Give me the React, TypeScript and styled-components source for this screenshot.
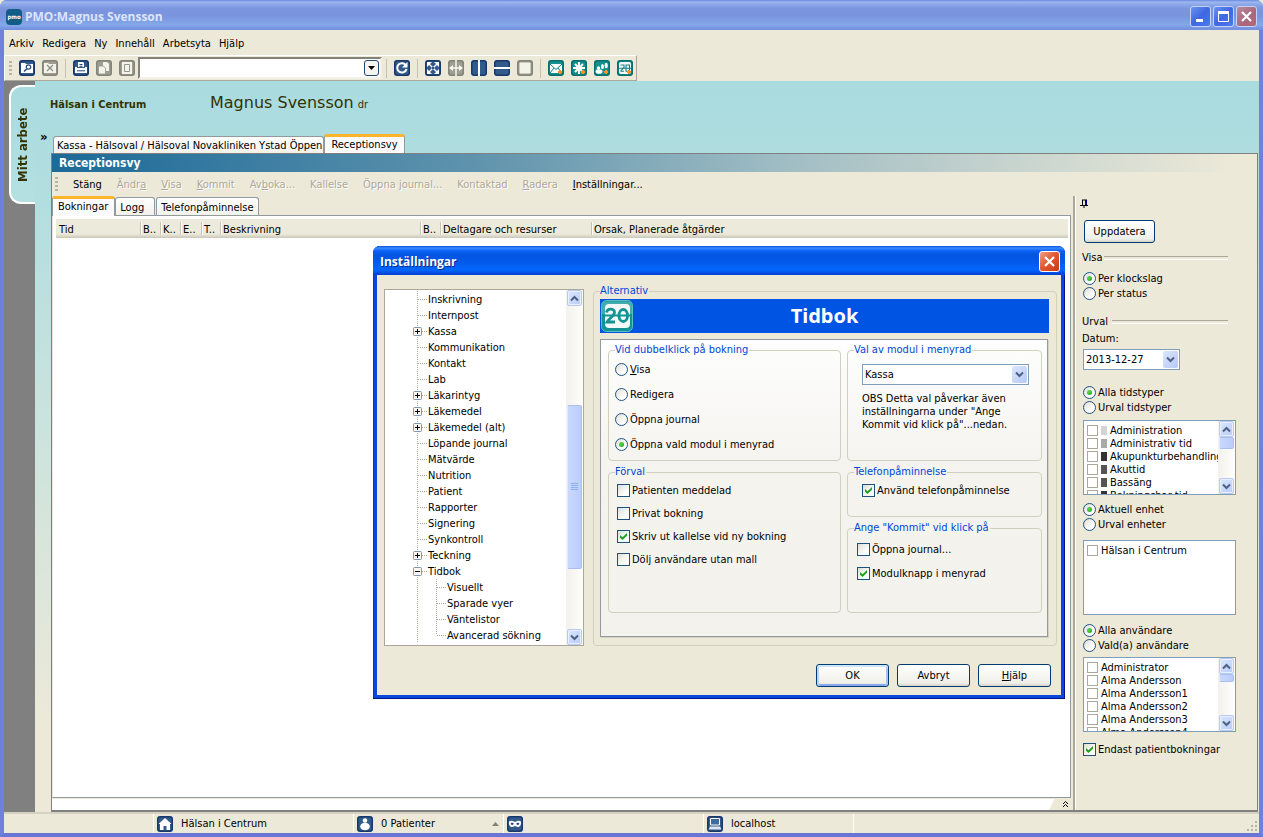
import React from "react";
import styled, { createGlobalStyle, css } from "styled-components";

const face = "#ece9d8";
const teal = "#a9dbdf";
const ui = `"DejaVu Sans Condensed", "DejaVu Sans", sans-serif`;

const GlobalStyle = createGlobalStyle`
  * { box-sizing: border-box; }
  html, body, #root { height: 100%; }
  body { margin: 0; background: ${face}; color: #000; font: 11px/13px ${ui}; }
  button, input, select { font: inherit; color: inherit; margin: 0; }
  svg { display: block; flex: none; }
`;

/* ---------- window frame ---------- */

const Window = styled.div`
  min-height: 100%;
  display: flex;
  flex-direction: column;
  border: solid #6f80dd;
  border-width: 0 4px 4px;
  border-bottom-color: #6876d6;
  border-radius: 7px 7px 0 0;
  background: ${face};
`;

const TitleBar = styled.header`
  display: flex;
  align-items: center;
  gap: 3px;
  height: 30px;
  margin: 0 -4px;
  padding: 3px 6px 0;
  border-radius: 7px 7px 0 0;
  background: linear-gradient(#6a86df 0, #9db7ee 2px, #8aa5e8 5px, #7a94dd 9px, #7a94de 16px, #84a9ea 25px, #7590df 29px);
`;

const AppTitle = styled.h1`
  flex: 1;
  margin: 0;
  font: bold 12px/18px "Open Sans", sans-serif;
  color: #dce5fa;
`;

const CaptionButton = styled.button<{ $tone: "blue" | "dim" | "red" }>`
  display: grid;
  place-items: center;
  width: 21px;
  height: 21px;
  padding: 0;
  border: 1px solid ${(p) => (p.$tone === "red" ? "#fff" : "#c3d2f5")};
  border-radius: 3px;
  background: ${(p) =>
    p.$tone === "blue"
      ? "linear-gradient(135deg, #6a93f2, #3f68e0 50%, #4a7cee)"
      : p.$tone === "dim"
        ? "linear-gradient(135deg, #b98a9c, #a8677c 60%, #b5687a)"
        : "linear-gradient(135deg, #f0a088, #e25a35 45%, #c93812)"};
`;

const CaptionButtons = styled.div`
  display: flex;
  gap: 2px;
`;

const MenuBar = styled.nav`
  display: flex;
  gap: 8px;
  height: 25px;
  padding: 7px 5px 0;
`;

const MenuItem = styled.button`
  height: 13px;
  padding: 0;
  border: 0;
  background: none;
`;

/* ---------- main toolbar ---------- */

const Toolbar = styled.div`
  align-self: flex-start;
  display: flex;
  align-items: center;
  height: 26px;
  padding: 0 0 0 4px;
  border: 1px solid;
  border-color: #fff #aca899 #aca899 #fff;
`;

const Grip = styled.span`
  width: 3px;
  height: 15px;
  background: repeating-linear-gradient(#b8b5a5 0 2px, transparent 2px 4px);
`;

const ToolGroup = styled.div`
  display: flex;
  gap: 7px;
  padding: 0 7px;
  &:last-child {
    padding-right: 3px;
  }
`;

const ToolButton = styled.button`
  width: 16px;
  height: 16px;
  padding: 0;
  border: 0;
  background: none;
`;

const ToolSeparator = styled.span`
  width: 1px;
  height: 19px;
  background: #c5c2b0;
`;

const Combo = styled.div`
  display: flex;
  width: 244px;
  height: 22px;
  margin: 0 4px 0 -4px;
  background: #fff;
  border: 2px solid;
  border-color: #848278 #f4f2e8 #f4f2e8 #848278;
`;

const ComboInput = styled.input`
  flex: 1;
  min-width: 0;
  border: 0;
  padding: 0 3px;
  background: none;
  outline: 0;
`;

const ComboButton = styled.button`
  display: grid;
  place-items: center;
  width: 15px;
  height: 16px;
  margin: 1px;
  padding: 0;
  border: 1px solid #1d4a75;
  border-radius: 3px;
  background: #f6f5ef;
`;

/* ---------- workspace ---------- */

const Body = styled.div`
  flex: 1;
  display: flex;
  min-height: 0;
`;

const Rail = styled.aside`
  width: 31px;
  padding: 4px 0 0 5px;
  background: #808080;
`;

const RailTabShape = styled.div`
  border: 2px solid #fff;
  border-right: 0;
  border-radius: 12px 0 0 12px;
  background: linear-gradient(${teal}, #b4e0e1);
`;

const RailTab = styled.button`
  display: flex;
  align-items: center;
  justify-content: center;
  width: 24px;
  height: 115px;
  padding: 0;
  border: 0;
  background: none;
  color: #333300;
  font: bold 13px/16px ${ui};
  writing-mode: vertical-rl;
  transform: rotate(180deg);
`;

const Workspace = styled.div`
  flex: 1;
  min-width: 0;
  display: flex;
  flex-direction: column;
  background: linear-gradient(${teal}, #b6dfe0 160px, ${face} 640px);
`;

const Banner = styled.div`
  display: flex;
  align-items: baseline;
  height: 53px;
  padding: 12px 0 0 15px;
  color: #333300;
`;

const Unit = styled.strong`
  width: 160px;
  font-size: 11px;
`;

const PatientName = styled.span`
  font: 16px/20px "DejaVu Sans", sans-serif;
`;

const Suffix = styled.span`
  margin-left: 4px;
`;

const ViewTabs = styled.div`
  display: flex;
  align-items: flex-end;
  height: 19px;
  padding-left: 5px;
`;

const Chevron = styled.button`
  align-self: flex-start;
  width: 13px;
  margin-top: -5px;
  padding: 0;
  border: 0;
  background: none;
  text-align: left;
  font: bold 13px/16px ${ui};
`;

const Tab = styled.button<{ $active?: boolean }>`
  position: relative;
  height: 17px;
  padding: 1px 1px 0 3px;
  border: 1px solid #919b9c;
  border-bottom: 0;
  border-radius: 3px 3px 0 0;
  background: linear-gradient(#fff, #f2f1ea);
  text-align: left;
  white-space: nowrap;
  ${(p) =>
    p.$active &&
    css`
      height: 19px;
      padding: 0 6px 2px;
      border-top: 3px solid #fbb42c;
      background: #fcfcfe;
    `}
`;

const Frame = styled.main`
  flex: 1;
  display: flex;
  flex-direction: column;
  margin: 0 1px 0 16px;
  border: solid #808080;
  border-width: 1px 1px 2px;
  background: ${face};
`;

const ViewTitle = styled.h2`
  margin: 0;
  height: 18px;
  padding: 2px 7px;
  font: bold 12px/14px ${ui};
  color: #fff;
  background: linear-gradient(90deg, #1c6a98, #5f93ad 35%, #a3bfc5 62%, ${face} 98%);
`;

const ViewBar = styled.div`
  display: flex;
  align-items: center;
  gap: 15px;
  height: 24px;
  padding: 0 4px 0 3px;
`;

const ViewAction = styled.button`
  padding: 0;
  border: 0;
  background: none;
  white-space: nowrap;
  &:disabled {
    color: #aca899;
    text-shadow: 1px 1px 0 #fff;
  }
`;

const Columns = styled.div`
  flex: 1;
  display: flex;
  min-height: 0;
`;

const Bookings = styled.section`
  flex: 1;
  min-width: 0;
  display: flex;
  flex-direction: column;
`;

const PageTabs = styled.div`
  display: flex;
  align-items: flex-end;
  gap: 1px;
  height: 19px;
`;

const PageTab = styled(Tab)<{ $min?: number }>`
  height: 18px;
  min-width: ${(p) => p.$min ?? 0}px;
  padding: 1px 4px 0;
  ${(p) =>
    p.$active &&
    css`
      height: 20px;
      padding: 0 6px 3px 5px;
      margin: 0 -1px -1px 0;
      z-index: 1;
    `}
`;

const Page = styled.div`
  flex: 1;
  margin-right: 2px;
  padding: 3px 2px 0 3px;
  border: 1px solid #919b9c;
  border-left-color: #e8e6da;
  background: #fff;
`;

const BookingTable = styled.table`
  width: 100%;
  border-collapse: collapse;
  table-layout: fixed;
`;

const HeadCell = styled.th<{ $w?: number }>`
  width: ${(p) => (p.$w ? `${p.$w}px` : "auto")};
  height: 19px;
  padding: 1px 0 0 3px;
  text-align: left;
  font-weight: normal;
  white-space: nowrap;
  overflow: hidden;
  background: linear-gradient(#ebeadb 0, #ebeadb 15px, #cbc7b8 19px);
  & + & {
    background:
      linear-gradient(#c7c5b2, #c7c5b2) 0 3px / 1px 13px no-repeat,
      linear-gradient(#fff, #fff) 1px 3px / 1px 13px no-repeat,
      linear-gradient(#ebeadb 0, #ebeadb 15px, #cbc7b8 19px);
  }
`;

const DrawerStrip = styled.div`
  display: flex;
  justify-content: flex-end;
  height: 11px;
  margin-top: 1px;
  padding: 1px 4px 1px 0;
  background: linear-gradient(115deg, #fff calc(100% - 22px), ${face} calc(100% - 21px));
`;

/* ---------- form controls ---------- */

const Choice = styled.label<{ $gap?: number }>`
  display: flex;
  align-items: center;
  gap: ${(p) => p.$gap ?? 2}px;
  min-height: 13px;
  white-space: nowrap;
`;

const Radio = styled.input.attrs({ type: "radio" })`
  appearance: none;
  flex: none;
  display: grid;
  place-items: center;
  width: 13px;
  height: 13px;
  border: 1px solid #1f5384;
  border-radius: 50%;
  background: linear-gradient(135deg, #dedcd2, #fff 70%);
  &:checked::after {
    content: "";
    width: 5px;
    height: 5px;
    border-radius: 50%;
    background: radial-gradient(circle at 35% 35%, #5ad84c, #1fa01f);
  }
`;

const Check = styled.input.attrs({ type: "checkbox" })<{ $flat?: boolean }>`
  appearance: none;
  flex: none;
  display: grid;
  place-items: center;
  width: ${(p) => (p.$flat ? 11 : 13)}px;
  height: ${(p) => (p.$flat ? 11 : 13)}px;
  border: 1px solid ${(p) => (p.$flat ? "#aca899" : "#1c5180")};
  background: ${(p) => (p.$flat ? "#fff" : "linear-gradient(135deg, #dcdcd7, #fff 70%)")};
  &:checked::after {
    content: "";
    width: 7px;
    height: 7px;
    background: #21a121;
    clip-path: polygon(0 28%, 36% 60%, 100% 0, 100% 40%, 36% 100%, 0 68%);
  }
`;

const PushButton = styled.button<{ $default?: boolean; $w: number }>`
  width: ${(p) => p.$w}px;
  height: 23px;
  padding: 0;
  border: 1px solid #003c74;
  border-radius: 3px;
  background: linear-gradient(#fff, #f0f0ea 85%, #d6d0c5);
  ${(p) =>
    p.$default &&
    css`
      box-shadow: inset 0 2px 0 #cee7ff, inset 2px 0 0 #bcd4f6, inset -2px 0 0 #a6c3f2, inset 0 -2px 0 #89a8ee;
    `}
`;

const SelectBox = styled.span`
  display: grid;
  height: 21px;
  border: 1px solid #7f9db9;
  background: #fff;
  & > * {
    grid-area: 1 / 1;
  }
`;

const Select = styled.select`
  appearance: none;
  width: 100%;
  padding: 0 18px 0 2px;
  border: 0;
  border-radius: 0;
  background: none;
`;

const ArrowBox = styled.span`
  display: grid;
  place-items: center;
  justify-self: end;
  align-self: stretch;
  width: 15px;
  margin: 1px;
  border-radius: 2px;
  background: linear-gradient(135deg, #dbe5fd, #b6c9f5);
  pointer-events: none;
`;

const ScrollBar = styled.span`
  display: flex;
  flex-direction: column;
  align-items: center;
  width: 17px;
  flex: none;
  background: linear-gradient(90deg, #f3f1ec, #fefefb);
`;

const ScrollButton = styled.button`
  display: grid;
  place-items: center;
  flex: none;
  width: 15px;
  height: 16px;
  padding: 0;
  border: 1px solid #b8caf4;
  border-radius: 2px;
  background: linear-gradient(135deg, #dbe6fe, #b9ccf8);
  box-shadow: inset 0 0 0 1px #e8effe;
`;

const Thumb = styled.span<{ $before: number; $size: number }>`
  display: grid;
  place-items: center;
  flex: none;
  width: 15px;
  height: ${(p) => p.$size}px;
  margin-top: ${(p) => p.$before}px;
  margin-bottom: auto;
  border: 1px solid #a9bff0;
  border-left-color: #e0e9fd;
  border-radius: 2px;
  background: linear-gradient(90deg, #c9d8fc, #bacdfa);
`;

/* ---------- filter panel ---------- */

const Filters = styled.aside`
  width: 184px;
  padding: 2px 21px 0 9px;
  border-left: 2px solid #aca899;
  box-shadow: inset 1px 0 0 #fff;
`;

const PinButton = styled.button`
  display: block;
  padding: 0;
  border: 0;
  background: none;
  margin: 1px 0 12px -4px;
`;

const Rule = styled.h3<{ $gap: number; $top: number }>`
  display: flex;
  align-items: center;
  gap: ${(p) => p.$gap}px;
  margin: ${(p) => p.$top}px 8px 0 -2px;
  font: inherit;
  &::after {
    content: "";
    flex: 1;
    height: 2px;
    border-top: 1px solid #aca899;
    border-bottom: 1px solid #fff;
  }
`;

const FilterRadios = styled.div<{ $top: number; $bottom?: number }>`
  display: grid;
  gap: 2px;
  margin: ${(p) => p.$top}px 0 ${(p) => p.$bottom ?? 6}px -1px;
`;

const FieldLabel = styled.label`
  display: block;
  margin: 4px 0 4px -2px;
`;

const DateBox = styled.div`
  width: 97px;
  margin-left: -1px;
`;

const ListBox = styled.div`
  display: flex;
  height: 75px;
  margin-left: -1px;
  border: 1px solid #7f9db9;
  background: #fff;
`;

const ListItems = styled.div`
  flex: 1;
  min-width: 0;
  padding: 3px 0 0 3px;
  overflow: hidden;
`;

const Swatch = styled.span<{ $c: string }>`
  flex: none;
  width: 6px;
  height: 9px;
  background: ${(p) => p.$c};
`;

const OnlyPatients = styled(Choice)`
  margin: 11px 0 0 -1px;
`;

/* ---------- status bar ---------- */

const StatusBar = styled.footer`
  display: flex;
  height: 21px;
  border-top: 2px solid #d6d2c2;
`;

const StatusCell = styled.div<{ $w?: number }>`
  display: flex;
  align-items: center;
  gap: 8px;
  width: ${(p) => (p.$w ? `${p.$w}px` : "auto")};
  flex: ${(p) => (p.$w ? "none" : "1")};
  padding: 0 4px 0 3px;
  border-right: 1px solid #fff;
  &:last-child {
    justify-content: flex-end;
    align-items: flex-end;
    border: 0;
    padding: 0;
  }
`;

const Spacer = styled.span`
  flex: 1;
`;

/* ---------- settings dialog ---------- */

const Dialog = styled.section`
  position: absolute;
  left: 373px;
  top: 246px;
  width: 692px;
  display: flex;
  flex-direction: column;
  padding: 0 4px 4px;
  border-radius: 7px 7px 0 0;
  background: #0a48dc;
  box-shadow: inset -1px -1px 0 #00138c, inset 1px 0 0 #0831d9;
`;

const DialogTitle = styled.header`
  display: flex;
  align-items: center;
  justify-content: space-between;
  height: 29px;
  margin: 0 -4px;
  padding: 2px 5px 0 7px;
  border-radius: 7px 7px 0 0;
  background: linear-gradient(#0a4bd8 0, #3a8cff 2px, #0a60f5 5px, #0355e0 9px, #0359ea 16px, #0267ff 24px, #0044d4 28px);
`;

const DialogName = styled.h2`
  margin: 0;
  font: bold 12px/18px "Open Sans", sans-serif;
  color: #fff;
  text-shadow: 1px 1px 0 #0a2a8c;
`;

const DialogBody = styled.div`
  display: grid;
  grid-template-columns: 200px 1fr;
  gap: 0 9px;
  padding: 9px 4px 8px 7px;
  background: ${face};
`;

const Tree = styled.div`
  display: flex;
  align-self: start;
  height: 357px;
  margin-top: 5px;
  border: 1px solid #aca899;
  background: #fff;
`;

const TreeItems = styled.ul`
  flex: 1;
  margin: 0;
  padding: 1px 0;
  list-style: none;
  overflow: hidden;
`;

const TreeRow = styled.li`
  display: flex;
  align-items: center;
  height: 16px;
  white-space: nowrap;
`;

const Group = styled.fieldset<{ $h?: number }>`
  min-width: 0;
  min-height: ${(p) => (p.$h ? `${p.$h}px` : "auto")};
  margin: 0;
  padding: 0 7px 7px 6px;
  border: 1px solid #d0d0bf;
  border-radius: 4px;
`;

const Legend = styled.legend`
  height: 14px;
  line-height: 14px;
  padding: 0 1px 0 0;
  color: #0046d5;
`;

const Heading = styled.div`
  display: grid;
  grid-template-columns: 32px 1fr;
  align-items: center;
  height: 34px;
  margin: 1px 0 6px;
  padding: 0 1px;
  background: #0054e3;
`;

const HeadingText = styled.h3`
  margin: 0;
  text-align: center;
  font: bold 20px/26px "Noto Sans", sans-serif;
  color: #fff;
  padding-right: 32px;
`;

const Options = styled.div`
  display: grid;
  grid-template-columns: 233fr 195fr;
  gap: 6px;
  min-height: 298px;
  margin-right: 1px;
  padding: 3px 5px 0 7px;
  border: 1px solid #919b9c;
  background: linear-gradient(#fefefe, #f4f3ee 45%, #f3f2ec);
  box-shadow: 1px 1px 0 #d6d2c2;
`;

const Stack = styled.div`
  display: flex;
  flex-direction: column;
  gap: 4px;
`;

const GroupBody = styled.div<{ $gap: number; $top: number; $left: number }>`
  display: grid;
  gap: ${(p) => p.$gap}px;
  padding: ${(p) => p.$top}px 5px 0 ${(p) => p.$left}px;
`;

const Note = styled.p`
  margin: 0;
`;

const DialogButtons = styled.div`
  grid-column: 1 / -1;
  display: flex;
  justify-content: flex-end;
  gap: 8px;
  padding: 18px 6px 0 0;
`;

/* ---------- drawings ---------- */

const tones = {
  blue: ["#17386b", "#3c6796"],
  gray: ["#84847a", "#a8a79c"],
  teal: ["#04706f", "#1c9a99"],
};

function Icon({ tone, children }: { tone: keyof typeof tones; children: React.ReactNode }) {
  const [edge, mid] = tones[tone];
  return (
    <svg width="16" height="16" viewBox="0 0 16 16" aria-hidden="true">
      <rect width="16" height="16" rx="3" fill={edge} />
      <rect x="1.5" y="1.5" width="13" height="13" rx="2" fill={mid} opacity="0.75" />
      {children}
    </svg>
  );
}

const Dot = () => <path d="M11 10h2v1h1v2h-1v1h-2v-1h-1v-2h1z" fill="#f7931e" />;

const icons = {
  find: (
    <Icon tone="blue">
      <path d="M2 3h4l1 1h7v9H2z" fill="#fff" />
      <circle cx="9.5" cy="7" r="2.2" fill="#fff" stroke="#24477a" strokeWidth="1.2" />
      <path d="M7.8 8.8 5 11.5" stroke="#24477a" strokeWidth="1.5" />
    </Icon>
  ),
  remove: (
    <Icon tone="gray">
      <path d="M2 3h4l1 1h7v9H2z" fill="#f4f3ea" />
      <path d="m5 5 6 6m0-6-6 6" stroke="#8c8b80" strokeWidth="1.3" />
    </Icon>
  ),
  print: (
    <Icon tone="blue">
      <path d="M5 2h5l1 1v4H5z" fill="#fff" />
      <path d="M2 7h2v1h8V7h2v6H2z" fill="#fff" />
      <path d="M6.5 4.5h3M6.5 6.3h3M4 10.8h8" stroke="#24477a" />
    </Icon>
  ),
  copy: (
    <Icon tone="gray">
      <path d="M7 2h4l2 2v7H7z" fill="#f4f3ea" />
      <path d="M2.500 6h4.500l2.500 2v6h-7z" fill="#f4f3ea" stroke="#97968b" strokeWidth=".8" />
    </Icon>
  ),
  page: (
    <Icon tone="gray">
      <path d="M3 2h10v12H3z" fill="#f4f3ea" />
      <path d="M5.5 4.5h5v7h-5z" fill="none" stroke="#97968b" />
    </Icon>
  ),
  refresh: (
    <Icon tone="blue">
      <path d="M12 5.5A4.7 4.7 0 1 0 12.5 9" fill="none" stroke="#fff" strokeWidth="2" />
      <path d="M13.5 2v5.5H8z" fill="#fff" />
    </Icon>
  ),
  expand: (
    <Icon tone="blue">
      <path d="m3 3 10 10M13 3 3 13" stroke="#fff" strokeWidth="1.4" />
      <path d="M2 2h5L2 7zM14 2v5L9 2zM2 14V9l5 5zM14 14H9l5-5z" fill="#fff" />
      <rect x="7" y="7" width="2" height="2" fill="#2d5686" />
    </Icon>
  ),
  width: (
    <Icon tone="gray">
      <path d="M8 0v16M2 8h12" stroke="#f8f7f0" strokeWidth="1.5" />
      <path d="M1 8l4-3v6zM15 8l-4-3v6z" fill="#f8f7f0" />
    </Icon>
  ),
  splitV: (
    <Icon tone="blue">
      <path d="M8 0v16" stroke="#fff" strokeWidth="2" />
    </Icon>
  ),
  splitH: (
    <Icon tone="blue">
      <path d="M0 8h16" stroke="#fff" strokeWidth="2" />
    </Icon>
  ),
  single: (
    <Icon tone="gray">
      <rect x="2.5" y="2.5" width="11" height="11" rx="1" fill="#f4f3ea" />
    </Icon>
  ),
  mail: (
    <Icon tone="teal">
      <path d="M2 4h12v9H2z" fill="#fff" />
      <path d="m2 4 6 5.5L14 4M2 13l4-5m8 5-4-5" fill="none" stroke="#0a7c7b" />
      <Dot />
    </Icon>
  ),
  star: (
    <Icon tone="teal">
      <path d="M8 2v12M2 8h12M4 4l8 8m0-8-8 8" stroke="#fff" strokeWidth="1.9" />
      <Dot />
    </Icon>
  ),
  people: (
    <Icon tone="teal">
      <circle cx="4.500" cy="8" r="1.700" fill="#fff" />
      <ellipse cx="5" cy="11.500" rx="3.500" ry="2.300" fill="#fff" />
      <ellipse cx="8.500" cy="6.500" rx="1.500" ry="2.500" fill="#fff" />
      <ellipse cx="12.200" cy="5.500" rx="1.600" ry="2.800" fill="#fff" />
      <Dot />
    </Icon>
  ),
  calendar: (
    <Icon tone="teal">
      <rect x="2" y="2" width="12" height="12" rx="2" fill="#fff" />
      <path d="M3.500 5h3.500v2.500L4 10.600v.7h3M9 5h3.500v6.300H9zM2 8.200h12" fill="none" stroke="#0a8584" strokeWidth="1.1" />
      <Dot />
    </Icon>
  ),
  home: (
    <Icon tone="blue">
      <path d="m8 2 6.5 6H13v6H9.500v-4h-3v4H3V8H1.500z" fill="#fff" />
    </Icon>
  ),
  patient: (
    <Icon tone="blue">
      <circle cx="8" cy="4.500" r="2.300" fill="#fff" />
      <ellipse cx="8" cy="10.500" rx="4.800" ry="3.800" fill="#fff" />
    </Icon>
  ),
  mask: (
    <Icon tone="blue">
      <path d="M2 5.500C4 4 6 5 8 6c2-1 4-2 6-.5.5 3-1 5.500-3 5.500-1.500 0-2-1-3-1s-1.500 1-3 1c-2 0-3.500-2.500-3-5.500z" fill="#fff" />
      <ellipse cx="5.200" cy="7.800" rx="1.500" ry="1.100" fill="#24477a" />
      <ellipse cx="10.800" cy="7.800" rx="1.500" ry="1.100" fill="#24477a" />
    </Icon>
  ),
  computer: (
    <Icon tone="blue">
      <path d="M3.500 2.500h9V9h-9z" fill="#3f6c9e" stroke="#fff" />
      <path d="M3 10.500h10l1.500 3h-13z" fill="#dfe6f0" />
    </Icon>
  ),
};

function Arrow({ dir = "down" }: { dir?: "up" | "down" }) {
  return (
    <svg width="9" height="7" viewBox="0 0 9 7" aria-hidden="true">
      <path d={dir === "down" ? "m1 1.500 3.500 3.500L8 1.500" : "M1 5.500 4.500 2 8 5.500"} fill="none" stroke="#4d6185" strokeWidth="2" />
    </svg>
  );
}

function Scroller({ before, size, grip }: { before: number; size: number; grip?: boolean }) {
  return (
    <ScrollBar>
      <ScrollButton aria-label="Upp"><Arrow dir="up" /></ScrollButton>
      <Thumb $before={before} $size={size}>
        {grip && (
          <svg width="7" height="8" viewBox="0 0 7 8" aria-hidden="true">
            <path d="M0 .5h7M0 2.500h7M0 4.500h7M0 6.500h7" stroke="#8cb0f8" />
          </svg>
        )}
      </Thumb>
      <ScrollButton aria-label="Ned"><Arrow /></ScrollButton>
    </ScrollBar>
  );
}

type Node = { name: string; sign?: "+" | "-"; child?: boolean; last?: boolean };

const nodes: Node[] = [
  { name: "Inskrivning" }, { name: "Internpost" }, { name: "Kassa", sign: "+" },
  { name: "Kommunikation" }, { name: "Kontakt" }, { name: "Lab" },
  { name: "Läkarintyg", sign: "+" }, { name: "Läkemedel", sign: "+" }, { name: "Läkemedel (alt)", sign: "+" },
  { name: "Löpande journal" }, { name: "Mätvärde" }, { name: "Nutrition" }, { name: "Patient" },
  { name: "Rapporter" }, { name: "Signering" }, { name: "Synkontroll" },
  { name: "Teckning", sign: "+" }, { name: "Tidbok", sign: "-" },
  { name: "Visuellt", child: true }, { name: "Sparade vyer", child: true },
  { name: "Väntelistor", child: true }, { name: "Avancerad sökning", child: true, last: true },
];

function Branch({ sign, child, last }: Node) {
  const w = child ? 62 : 43;
  return (
    <svg width={w} height="16" viewBox={`0 0 ${w} 16`} aria-hidden="true">
      <g stroke="#aca899" strokeDasharray="1 1">
        <path d="M32.500 0v16" />
        {child ? <path d={`M51.500 0v${last ? 8 : 16}M52 8.500h9`} /> : <path d="M33 8.500h9" />}
      </g>
      {sign && (
        <g>
          <rect x="28.500" y="4.500" width="8" height="8" rx="1" fill="#f8f7f3" stroke="#7898b5" />
          <path d={sign === "+" ? "M30 8.500h5M32.500 6v5" : "M30 8.500h5"} stroke="#000" />
        </g>
      )}
    </svg>
  );
}

const columns: [string, number?][] = [
  ["Tid", 84], ["B..", 20], ["K..", 20], ["E..", 21], ["T..", 19],
  ["Beskrivning", 200], ["B..", 20], ["Deltagare och resurser", 151], ["Orsak, Planerade åtgärder"],
];

const types: [string, string][] = [
  ["Administration", "#d4d4d4"], ["Administrativ tid", "#a8a8a8"], ["Akupunkturbehandling", "#333"],
  ["Akuttid", "#555"], ["Bassäng", "#555"], ["Bokningsbar tid", "#333"],
];

const users = ["Administrator", "Alma Andersson", "Alma Andersson1", "Alma Andersson2", "Alma Andersson3", "Alma Andersson4"];

type PairProps = { name: string; options: [string, string]; top: number; bottom?: number };

function RadioPair({ name, options, top, bottom }: PairProps) {
  return (
    <FilterRadios $top={top} $bottom={bottom}>
      {options.map((o, i) => (
        <Choice key={o}><Radio name={name} defaultChecked={i === 0} />{o}</Choice>
      ))}
    </FilterRadios>
  );
}

function CloseX() {
  return (
    <svg width="13" height="13" viewBox="0 0 13 13" aria-hidden="true">
      <path d="m2 2 9 9m0-9-9 9" stroke="#fff" strokeWidth="2.200" />
    </svg>
  );
}

function SettingsDialog() {
  return (
    <Dialog role="dialog" aria-labelledby="settings-title">
      <DialogTitle>
        <DialogName id="settings-title">Inställningar</DialogName>
        <CaptionButton $tone="red" aria-label="Stäng"><CloseX /></CaptionButton>
      </DialogTitle>
      <DialogBody>
        <Tree>
          <TreeItems>
            {nodes.map((n) => (
              <TreeRow key={n.name}><Branch {...n} />{n.name}</TreeRow>
            ))}
          </TreeItems>
          <Scroller before={99} size={164} grip />
        </Tree>
        <Group>
          <Legend>Alternativ</Legend>
          <Heading>
            <svg width="32" height="32" viewBox="0 0 32 32" aria-hidden="true">
              <rect x=".5" y=".5" width="31" height="31" rx="5" fill="#159394" stroke="#5cc0c0" />
              <path d="M4 1.500h24a3 3 0 0 1 3 3V14H1V4.500a3 3 0 0 1 3-3z" fill="#5ab9ba" opacity=".65" />
              <rect x="4" y="4" width="25" height="24" rx="4" fill="#f3f8f8" />
              <path d="M5.500 12.500c.5-4.500 8-4.500 8-.2 0 3.500-5 5.700-7.500 9.700h8M18 15.500c0-8 8.500-8 8.500 0s-8.500 8-8.500 0z" fill="none" stroke="#159394" strokeWidth="2.800" />
              <path d="M2 15.500h28" stroke="#159394" strokeWidth="2" />
            </svg>
            <HeadingText>Tidbok</HeadingText>
          </Heading>
          <Options>
            <Stack>
              <Group $h={118}>
                <Legend>Vid dubbelklick på bokning</Legend>
                <GroupBody $gap={12} $top={6} $left={0}>
                  <Choice><Radio name="dbl" /><span><u>V</u>isa</span></Choice>
                  <Choice><Radio name="dbl" />Redigera</Choice>
                  <Choice><Radio name="dbl" />Öppna journal</Choice>
                  <Choice><Radio name="dbl" defaultChecked />Öppna vald modul i menyrad</Choice>
                </GroupBody>
              </Group>
              <Group $h={148}>
                <Legend>Förval</Legend>
                <GroupBody $gap={10} $top={5} $left={2}>
                  <Choice><Check />Patienten meddelad</Choice>
                  <Choice><Check />Privat bokning</Choice>
                  <Choice><Check defaultChecked />Skriv ut kallelse vid ny bokning</Choice>
                  <Choice><Check />Dölj användare utan mall</Choice>
                </GroupBody>
              </Group>
            </Stack>
            <Stack>
              <Group $h={118}>
                <Legend>Val av modul i menyrad</Legend>
                <GroupBody $gap={7} $top={7} $left={8}>
                  <SelectBox>
                    <Select aria-label="Val av modul i menyrad"><option>Kassa</option></Select>
                    <ArrowBox><Arrow /></ArrowBox>
                  </SelectBox>
                  <Note>
                    OBS Detta val påverkar även<br />
                    inställningarna under "Ange<br />
                    Kommit vid klick på"...nedan.
                  </Note>
                </GroupBody>
              </Group>
              <Group $h={52}>
                <Legend>Telefonpåminnelse</Legend>
                <GroupBody $gap={0} $top={5} $left={8}>
                  <Choice><Check defaultChecked />Använd telefonpåminnelse</Choice>
                </GroupBody>
              </Group>
              <Group $h={92}>
                <Legend>Ange "Kommit" vid klick på</Legend>
                <GroupBody $gap={11} $top={8} $left={3}>
                  <Choice><Check />Öppna journal...</Choice>
                  <Choice><Check defaultChecked />Modulknapp i menyrad</Choice>
                </GroupBody>
              </Group>
            </Stack>
          </Options>
        </Group>
        <DialogButtons>
          <PushButton $w={73} $default>OK</PushButton>
          <PushButton $w={73}>Avbryt</PushButton>
          <PushButton $w={73}><u>H</u>jälp</PushButton>
        </DialogButtons>
      </DialogBody>
    </Dialog>
  );
}

export default function App() {
  return (
    <>
      <GlobalStyle />
      <Window>
        <TitleBar>
          <svg width="16" height="16" viewBox="0 0 16 16" aria-hidden="true">
            <rect width="16" height="16" rx="4" fill="#125d85" />
            <text x="8" y="10" textAnchor="middle" fontSize="6" fontWeight="bold" fill="#fff" fontFamily="DejaVu Sans Condensed">pmo</text>
          </svg>
          <AppTitle>PMO:Magnus Svensson</AppTitle>
          <CaptionButtons>
            <CaptionButton $tone="blue" aria-label="Minimera">
              <svg width="13" height="13" viewBox="0 0 13 13"><path d="M2 9h7v3H2z" fill="#fff" /></svg>
            </CaptionButton>
            <CaptionButton $tone="blue" aria-label="Maximera">
              <svg width="13" height="13" viewBox="0 0 13 13"><path d="M1.500 2.500h10v9h-10z" fill="none" stroke="#fff" /><path d="M1 1h11v3H1z" fill="#fff" /></svg>
            </CaptionButton>
            <CaptionButton $tone="dim" aria-label="Stäng"><CloseX /></CaptionButton>
          </CaptionButtons>
        </TitleBar>
        <MenuBar>
          {["Arkiv", "Redigera", "Ny", "Innehåll", "Arbetsyta", "Hjälp"].map((m) => (
            <MenuItem key={m}>{m}</MenuItem>
          ))}
        </MenuBar>
        <Toolbar>
          <Grip />
          <ToolGroup>
            <ToolButton aria-label="Sök">{icons.find}</ToolButton>
            <ToolButton aria-label="Ta bort">{icons.remove}</ToolButton>
          </ToolGroup>
          <ToolSeparator />
          <ToolGroup>
            <ToolButton aria-label="Skriv ut">{icons.print}</ToolButton>
            <ToolButton aria-label="Kopiera">{icons.copy}</ToolButton>
            <ToolButton aria-label="Sida">{icons.page}</ToolButton>
          </ToolGroup>
          <Combo>
            <ComboInput aria-label="Sökfält" />
            <ComboButton aria-label="Visa lista">
              <svg width="7" height="4" viewBox="0 0 7 4"><path d="M0 0h7L3.500 4z" /></svg>
            </ComboButton>
          </Combo>
          <ToolSeparator />
          <ToolGroup>
            <ToolButton aria-label="Uppdatera">{icons.refresh}</ToolButton>
          </ToolGroup>
          <ToolSeparator />
          <ToolGroup>
            <ToolButton aria-label="Expandera">{icons.expand}</ToolButton>
            <ToolButton aria-label="Bredd">{icons.width}</ToolButton>
            <ToolButton aria-label="Dela lodrätt">{icons.splitV}</ToolButton>
            <ToolButton aria-label="Dela vågrätt">{icons.splitH}</ToolButton>
            <ToolButton aria-label="En vy">{icons.single}</ToolButton>
          </ToolGroup>
          <ToolSeparator />
          <ToolGroup>
            <ToolButton aria-label="Meddelande">{icons.mail}</ToolButton>
            <ToolButton aria-label="Ny">{icons.star}</ToolButton>
            <ToolButton aria-label="Grupp">{icons.people}</ToolButton>
            <ToolButton aria-label="Tidbok">{icons.calendar}</ToolButton>
          </ToolGroup>
        </Toolbar>
        <Body>
          <Rail>
            <RailTabShape><RailTab>Mitt arbete</RailTab></RailTabShape>
          </Rail>
          <Workspace>
            <Banner>
              <Unit>Hälsan i Centrum</Unit>
              <PatientName>Magnus Svensson</PatientName>
              <Suffix>dr</Suffix>
            </Banner>
            <ViewTabs>
              <Chevron aria-label="Visa mer">»</Chevron>
              <Tab>Kassa - Hälsoval / Hälsoval Novakliniken Ystad Öppen</Tab>
              <Tab $active>Receptionsvy</Tab>
            </ViewTabs>
            <Frame>
              <ViewTitle>Receptionsvy</ViewTitle>
              <ViewBar>
                <Grip />
                <ViewAction>Stäng</ViewAction>
                <ViewAction disabled>Ändr<u>a</u></ViewAction>
                <ViewAction disabled><u>V</u>isa</ViewAction>
                <ViewAction disabled><u>K</u>ommit</ViewAction>
                <ViewAction disabled>Av<u>b</u>oka...</ViewAction>
                <ViewAction disabled>Kallelse</ViewAction>
                <ViewAction disabled>Öppna journal...</ViewAction>
                <ViewAction disabled>Kontaktad</ViewAction>
                <ViewAction disabled><u>R</u>adera</ViewAction>
                <ViewAction><u>I</u>nställningar...</ViewAction>
              </ViewBar>
              <Columns>
                <Bookings>
                  <PageTabs>
                    <PageTab $active>Bokningar</PageTab>
                    <PageTab $min={40}>Logg</PageTab>
                    <PageTab>Telefonpåminnelse</PageTab>
                  </PageTabs>
                  <Page>
                    <BookingTable>
                      <thead>
                        <tr>{columns.map(([c, w], i) => <HeadCell key={i} $w={w}>{c}</HeadCell>)}</tr>
                      </thead>
                    </BookingTable>
                  </Page>
                  <DrawerStrip>
                    <svg width="7" height="8" viewBox="0 0 7 8" aria-hidden="true">
                      <path d="m1 4 2.500-2.500L6 4M1 7l2.500-2.500L6 7" fill="none" stroke="#000" />
                    </svg>
                  </DrawerStrip>
                </Bookings>
                <Filters>
                  <PinButton aria-label="Fäst">
                    <svg width="8" height="9" viewBox="0 0 8 9">
                      <path d="M2 1h5M2.500 1v5M0 6.500h8M4 7v2" fill="none" stroke="#000" />
                      <path d="M5 1h2v5H5z" fill="#00007a" />
                    </svg>
                  </PinButton>
                  <PushButton $w={71}>Uppdatera</PushButton>
                  <Rule $gap={1} $top={8}>Visa</Rule>
                  <RadioPair name="visa" top={8} options={["Per klockslag", "Per status"]} />
                  <Rule $gap={4} $top={15}>Urval</Rule>
                  <FieldLabel htmlFor="datum">Datum:</FieldLabel>
                  <DateBox>
                    <SelectBox>
                      <Select id="datum"><option>2013-12-27</option></Select>
                      <ArrowBox><Arrow /></ArrowBox>
                    </SelectBox>
                  </DateBox>
                  <RadioPair name="tidstyp" top={16} options={["Alla tidstyper", "Urval tidstyper"]} />
                  <ListBox>
                    <ListItems>
                      {types.map(([t, c]) => (
                        <Choice key={t} $gap={3}><Check $flat /><Swatch $c={c} />{t}</Choice>
                      ))}
                    </ListItems>
                    <Scroller before={0} size={12} />
                  </ListBox>
                  <RadioPair name="enhet" top={8} bottom={9} options={["Aktuell enhet", "Urval enheter"]} />
                  <ListBox>
                    <ListItems>
                      <Choice $gap={3}><Check $flat />Hälsan i Centrum</Choice>
                    </ListItems>
                  </ListBox>
                  <RadioPair name="anvandare" top={9} bottom={5} options={["Alla användare", "Vald(a) användare"]} />
                  <ListBox>
                    <ListItems>
                      {users.map((u) => <Choice key={u} $gap={3}><Check $flat />{u}</Choice>)}
                    </ListItems>
                    <Scroller before={0} size={8} />
                  </ListBox>
                  <OnlyPatients><Check defaultChecked />Endast patientbokningar</OnlyPatients>
                </Filters>
              </Columns>
            </Frame>
          </Workspace>
        </Body>
        <StatusBar>
          <StatusCell $w={150} />
          <StatusCell $w={200}>{icons.home}Hälsan i Centrum</StatusCell>
          <StatusCell $w={150}>
            {icons.patient}0 Patienter<Spacer />
            <svg width="7" height="4" viewBox="0 0 7 4"><path d="M0 4h7L3.500 0z" fill="#848278" /></svg>
          </StatusCell>
          <StatusCell $w={200}>{icons.mask}</StatusCell>
          <StatusCell $w={150}>{icons.computer}localhost</StatusCell>
          <StatusCell>
            <svg width="12" height="12" viewBox="0 0 12 12" aria-hidden="true">
              <path d="M8 0h2v2H8zM4 4h2v2H4zM8 4h2v2H8zM0 8h2v2H0zM4 8h2v2H4zM8 8h2v2H8z" fill="#b8b4a2" />
            </svg>
          </StatusCell>
        </StatusBar>
      </Window>
      <SettingsDialog />
    </>
  );
}
